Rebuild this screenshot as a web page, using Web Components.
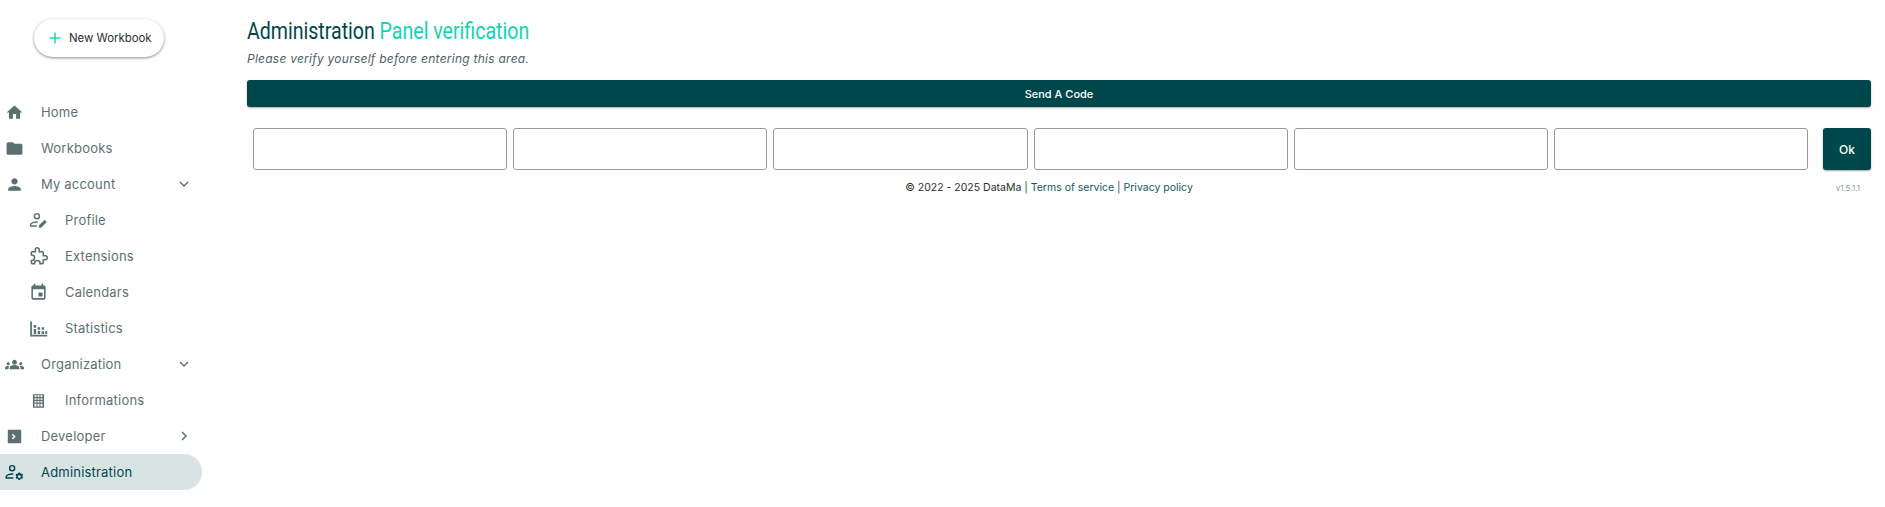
<!DOCTYPE html>
<html lang="en">
<head>
<meta charset="utf-8">
<title>Administration</title>
<style>
  html, body { margin: 0; height: 100%; background: #fff; }
  body { font-family: Inter, "Open Sans", sans-serif; }
</style>
</head>
<body>
<dm-app>
  <dm-sidebar slot="side">
    <dm-nav-item icon="home" label="Home"></dm-nav-item>
    <dm-nav-item icon="folder" label="Workbooks"></dm-nav-item>
    <dm-nav-item icon="person" label="My account" arrow="down"></dm-nav-item>
    <dm-nav-item icon="profile" label="Profile" sub></dm-nav-item>
    <dm-nav-item icon="extension" label="Extensions" sub></dm-nav-item>
    <dm-nav-item icon="event" label="Calendars" sub></dm-nav-item>
    <dm-nav-item icon="stats" label="Statistics" sub></dm-nav-item>
    <dm-nav-item icon="groups" label="Organization" arrow="down"></dm-nav-item>
    <dm-nav-item icon="building" label="Informations" sub></dm-nav-item>
    <dm-nav-item icon="terminal" label="Developer" arrow="right"></dm-nav-item>
    <dm-nav-item icon="admin" label="Administration" active></dm-nav-item>
  </dm-sidebar>
  <dm-verify slot="main"></dm-verify>
</dm-app>

<script>
const ICONES = {
  home: `<path d="M10 20v-6h4v6h5v-8h3L12 3 2 12h3v8z"/>`,
  folder: `<path d="M10 4H4c-1.1 0-1.99.9-1.99 2L2 18c0 1.1.9 2 2 2h16c1.1 0 2-.9 2-2V8c0-1.1-.9-2-2-2h-8l-2-2z"/>`,
  person: `<path d="M12 12c2.21 0 4-1.79 4-4s-1.79-4-4-4-4 1.79-4 4 1.79 4 4 4zm0 2c-2.67 0-8 1.34-8 4v2h16v-2c0-2.66-5.33-4-8-4z"/>`,
  profile: `<g fill="none" stroke="currentColor" stroke-width="1.800"><circle cx="10" cy="6.500" r="3.200"/><path d="M11 14c-4.500-.3-9 1.200-9 3.500V19h8"/></g><path d="M12.500 21v-2.800l7.200-7 2.800 2.800-7.200 7z"/>`,
  extension: `<path fill="none" stroke="currentColor" stroke-width="2" d="M20.500 11H18V7c0-.6-.4-1-1-1h-4V3.500a2.500 2.500 0 0 0-5 0V6H4c-.6 0-1 .4-1 1v3h.5a3.500 3.500 0 0 1 0 7H3v3c0 .6.4 1 1 1h3v-.5a3.500 3.500 0 0 1 7 0v.5h3c.6 0 1-.4 1-1v-4h2.500a2.500 2.500 0 0 0 0-5z"/>`,
  event: `<path d="M17 12h-5v5h5v-5zM16 1v2H8V1H6v2H5c-1.110 0-1.990.9-1.990 2L3 19c0 1.100.89 2 2 2h14c1.100 0 2-.9 2-2V5c0-1.100-.9-2-2-2h-1V1h-2zm3 18H5V8h14v11z"/>`,
  stats: `<path d="M1.500 3h2.200v16.800H23V22H1.500z"/><path d="M6 12.500h3V19H6zM6 7.500h3v3.500H6zM11 10.500h3v3h-3zM11 15h3v4h-3zM16 10.500h3v3h-3zM16 15.500h3V19h-3zM20.500 15.500H23V19h-2.500z"/>`,
  groups: `<path d="M12 12.750c1.630 0 3.070.39 4.240.9 1.080.48 1.760 1.560 1.760 2.730V18H6v-1.610c0-1.180.68-2.260 1.760-2.730 1.170-.52 2.610-.91 4.240-.91zM4 13c1.100 0 2-.9 2-2s-.9-2-2-2-2 .9-2 2 .9 2 2 2zm1.130 1.100c-.37-.06-.74-.1-1.130-.1-.99 0-1.930.21-2.780.58C.48 14.900 0 15.620 0 16.430V18h4.500v-1.610c0-.83.23-1.610.63-2.290zM20 13c1.100 0 2-.9 2-2s-.9-2-2-2-2 .9-2 2 .9 2 2 2zm4 3.430c0-.81-.48-1.530-1.220-1.850-.85-.37-1.790-.58-2.780-.58-.39 0-.76.04-1.130.1.4.68.63 1.460.63 2.290V18H24v-1.570zM12 6c1.660 0 3 1.340 3 3s-1.340 3-3 3-3-1.340-3-3 1.340-3 3-3z"/>`,
  building: `<path fill-rule="evenodd" d="M5 4h14v17H5zM7 5.500v2h2.500v-2zM10.800 5.500v2h2.400v-2zM14.500 5.500v2H17v-2zM7 9v2h2.500V9zM10.800 9v2h2.400V9zM14.500 9v2H17V9zM7 12.500v2h2.500v-2zM10.800 12.500v2h2.400v-2zM14.500 12.500v2H17v-2zM7 16v3.500h2.500V16zM10.800 16v3.500h2.400V16zM14.500 16v3.500H17V16z"/>`,
  terminal: `<path fill-rule="evenodd" d="M4.500 3.500h15a1 1 0 0 1 1 1v15a1 1 0 0 1-1 1h-15a1 1 0 0 1-1-1v-15a1 1 0 0 1 1-1zM10 8.500L8.700 9.800 10.900 12l-2.200 2.200L10 15.500l3.500-3.500z"/>`,
  admin: `<g fill="none" stroke="currentColor" stroke-width="1.800"><circle cx="9" cy="6.500" r="3.200"/><path d="M10.500 14c-4.500-.4-9 1.200-9 3.500V19h9"/></g><path fill-rule="evenodd" d="M19 12l1 1.700 1.900-.2.900 1.700-1.100 1.500 1.100 1.500-.9 1.700-1.900-.2-1 1.700h-1.800l-1-1.700-1.900.2-.9-1.700 1.100-1.500-1.100-1.500.9-1.700 1.900.2 1-1.700zM18.100 15.100a1.600 1.600 0 1 0 0 3.800 1.600 1.600 0 0 0 0-3.800z"/>`,
};

const FLECHAS = {
  down: `<path d="M6 9l6 6 6-6"/>`,
  right: `<path d="M9 6l6 6-6 6"/>`,
};

class DmApp extends HTMLElement {
  constructor() {
    super();
    this.attachShadow({ mode: "open" });
    this.shadowRoot.innerHTML = `
      <style>
        :host { display: grid; grid-template-columns: 247px 1fr; height: 507px; overflow: hidden; }
        .main { padding-right: 14px; min-width: 0; }
      </style>
      <slot name="side"></slot>
      <div class="main"><slot name="main"></slot></div>
    `;
  }
}

class DmNewButton extends HTMLElement {
  constructor() {
    super();
    this.attachShadow({ mode: "open" });
    this.shadowRoot.innerHTML = `
      <style>
        :host { display: inline-flex; }
        button {
          display: flex; align-items: center; gap: 6px;
          width: 130px; height: 38px; padding: 0 0 0 13px;
          border: 0; border-radius: 19px; background: #fff;
          box-shadow: 0 1px 3px rgba(0, 0, 0, 0.45);
          font: 400 11.400px Inter, sans-serif; color: #2b2f2f; white-space: nowrap;
        }
        svg { width: 16px; height: 16px; flex: none; }
      </style>
      <button type="button">
        <svg viewBox="0 0 16 16"><path d="M8 2.500v11M2.500 8h11" stroke="#1fd6b6" stroke-width="1.500" fill="none"/></svg>
        <slot>New Workbook</slot>
      </button>
    `;
  }
}

class DmSidebar extends HTMLElement {
  constructor() {
    super();
    this.attachShadow({ mode: "open" });
    this.shadowRoot.innerHTML = `
      <style>
        :host { display: block; width: 202px; }
        .top { display: flex; padding: 19px 0 0 34px; height: 75px; }
      </style>
      <div class="top"><dm-new-button></dm-new-button></div>
      <slot></slot>
    `;
  }
}

class DmNavItem extends HTMLElement {
  connectedCallback() {
    if (this.shadowRoot) return;
    this.attachShadow({ mode: "open" });
    const arrow = this.getAttribute("arrow");
    this.shadowRoot.innerHTML = `
      <style>
        :host { display: block; color: #5b7171; }
        :host([active]) { color: #00474b; }
        .row {
          display: flex; align-items: center; height: 36px;
          padding-left: 5px; border-radius: 0 18px 18px 0;
          font: 400 13px Inter, sans-serif; letter-spacing: 0.2px;
        }
        :host([sub]) .row { padding-left: 29px; }
        :host([active]) .row { background: #d7e4e3; }
        .ico { width: 19px; height: 19px; flex: none; fill: currentColor; margin-right: 17px; }
        .txt { flex: 1; white-space: nowrap; }
        .arr { width: 16px; height: 16px; margin-right: 10px; fill: none; stroke: currentColor; stroke-width: 2.200; }
      </style>
      <div class="row">
        <svg class="ico" viewBox="0 0 24 24">${ICONES[this.getAttribute("icon")] || ""}</svg>
        <span class="txt">${this.getAttribute("label")}</span>
        ${arrow ? `<svg class="arr" viewBox="0 0 24 24">${FLECHAS[arrow]}</svg>` : ""}
      </div>
    `;
  }
}

class DmVerify extends HTMLElement {
  constructor() {
    super();
    this.attachShadow({ mode: "open" });
    const casillas = Array.from({ length: 6 }, () => `<input type="text" maxlength="1" aria-label="Code digit">`).join("");
    this.shadowRoot.innerHTML = `
      <style>
        :host { display: block; padding-top: 16px; }
        h1 {
          margin: 0; font: 400 24px/30px Roboto, sans-serif; white-space: nowrap;
          color: #00474b; transform: scaleX(0.815); transform-origin: left center;
        }
        h1 span { color: #16d3b4; }
        p {
          margin: 5px 0 0; font: italic 400 12px/16px Inter, sans-serif;
          color: #4c5f66; letter-spacing: 0.25px;
        }
        .send {
          display: block; width: 100%; height: 27px; margin-top: 13px; padding: 0;
          border: 0; border-radius: 3px; background: #00474b; color: #fff;
          box-shadow: 0 1px 2px rgba(0, 0, 0, 0.35);
          font: 500 11px Inter, sans-serif;
        }
        .code { display: flex; gap: 6px; margin-top: 21px; padding-left: 6px; }
        input {
          flex: 1; min-width: 0; height: 42px; box-sizing: border-box; padding: 0 8px;
          border: 1px solid #9a9a9a; border-radius: 3px; background: #fff; outline: 0;
        }
        .ok {
          flex: none; width: 48px; height: 42px; margin-left: 9px; padding: 0;
          border: 0; border-radius: 3px; background: #00474b; color: #fff;
          box-shadow: 0 1px 2px rgba(0, 0, 0, 0.35);
          font: 500 12px Inter, sans-serif;
        }
        footer {
          position: relative; margin-top: 11px; padding-right: 20px; text-align: center;
          font: 400 10.500px/14px Inter, sans-serif; color: #2b2f2f;
        }
        footer a { color: #0f5b60; text-decoration: none; }
        .sep { color: #0f5b60; }
        .ver {
          position: absolute; right: 11px; top: 0;
          font-size: 8px; color: #8b9a9a;
        }
      </style>
      <h1>Administration <span>Panel verification</span></h1>
      <p>Please verify yourself before entering this area.</p>
      <button type="button" class="send">Send A Code</button>
      <div class="code">${casillas}<button type="button" class="ok">Ok</button></div>
      <footer>© 2022 - 2025 DataMa <span class="sep">|</span> <a href="#">Terms of service</a> <span class="sep">|</span> <a href="#">Privacy policy</a><span class="ver">v1.5.1.1</span></footer>
    `;
  }
}

customElements.define("dm-new-button", DmNewButton);
customElements.define("dm-nav-item", DmNavItem);
customElements.define("dm-sidebar", DmSidebar);
customElements.define("dm-verify", DmVerify);
customElements.define("dm-app", DmApp);
</script>
</body>
</html>
